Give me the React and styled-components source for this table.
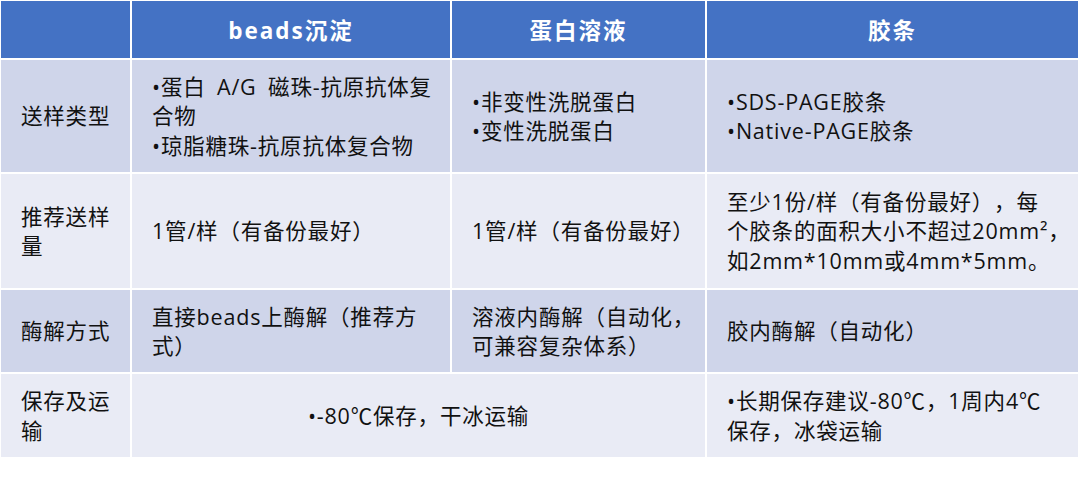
import React from "react";
import styled, { createGlobalStyle } from "styled-components";

const Global = createGlobalStyle`
  html, body { margin: 0; padding: 0; background: #ffffff; }
  body {
    font-family: "Open Sans", "Noto Sans CJK SC", sans-serif;
    text-spacing-trim: space-all;
  }
`;

const Page = styled.div`
  padding: 1px 0 0 1px;
  width: 1080px;
  height: 488px;
  box-sizing: border-box;
  background: #ffffff;
`;

const Table = styled.div`
  display: grid;
  grid-template-columns: 129px 318px 253px 371px;
  grid-template-rows: 57px 112px 114px 82px 83px;
  gap: 2px;
  background: #ffffff;
`;

const HeaderCell = styled.div`
  background: #4472c4;
  color: #ffffff;
  font-weight: 700;
  font-size: 22.5px;
  letter-spacing: 2px;
  display: flex;
  align-items: center;
  justify-content: center;
  text-spacing-trim: space-all;
`;

const Cell = styled.div`
  background: ${(p) => (p.$tone === "dark" ? "#cfd5ea" : "#e9ebf5")};
  color: #111111;
  font-size: 21.5px;
  letter-spacing: 0.8px;
  line-height: 29.5px;
  display: flex;
  flex-direction: column;
  justify-content: center;
  align-items: ${(p) => (p.$center ? "center" : "flex-start")};
  padding-left: ${(p) => p.$padLeft}px;
  grid-column: ${(p) => (p.$span ? `span ${p.$span}` : "auto")};
  white-space: pre;
  box-sizing: border-box;
  text-spacing-trim: space-all;
`;

const Line = styled.span`
  display: block;
`;

const rows = [
  {
    tone: "dark",
    label: ["送样类型"],
    cells: [
      { lines: ["•蛋白\u2002A/G\u2002磁珠-抗原抗体复", "合物", "•琼脂糖珠-抗原抗体复合物"] },
      { lines: ["•非变性洗脱蛋白", "•变性洗脱蛋白"] },
      { lines: ["•SDS-PAGE胶条", "•Native-PAGE胶条"] },
    ],
  },
  {
    tone: "light",
    label: ["推荐送样", "量"],
    cells: [
      { lines: ["1管/样（有备份最好）"] },
      { lines: ["1管/样（有备份最好）"] },
      {
        lines: [
          "至少1份/样（有备份最好），每",
          "个胶条的面积大小不超过20mm²，",
          "如2mm*10mm或4mm*5mm。",
        ],
      },
    ],
  },
  {
    tone: "dark",
    label: ["酶解方式"],
    cells: [
      { lines: ["直接beads上酶解（推荐方", "式）"] },
      { lines: ["溶液内酶解（自动化，", "可兼容复杂体系）"] },
      { lines: ["胶内酶解（自动化）"] },
    ],
  },
  {
    tone: "light",
    label: ["保存及运", "输"],
    cells: [
      { lines: ["•-80℃保存，干冰运输"], span: 2, center: true },
      { lines: ["•长期保存建议-80℃，1周内4℃", "保存，冰袋运输"] },
    ],
  },
];

export default function App() {
  return (
    <Page>
      <Global />
      <Table>
        <HeaderCell />
        <HeaderCell>beads沉淀</HeaderCell>
        <HeaderCell>蛋白溶液</HeaderCell>
        <HeaderCell>胶条</HeaderCell>
        {rows.map((row, ri) => (
          <React.Fragment key={ri}>
            <Cell $tone={row.tone} $padLeft={20}>
              {row.label.map((l, i) => (
                <Line key={i}>{l}</Line>
              ))}
            </Cell>
            {row.cells.map((c, ci) => (
              <Cell
                key={ci}
                $tone={row.tone}
                $span={c.span}
                $center={c.center}
                $padLeft={c.center ? 0 : 20}
              >
                {c.lines.map((l, i) => (
                  <Line key={i}>{l}</Line>
                ))}
              </Cell>
            ))}
          </React.Fragment>
        ))}
      </Table>
    </Page>
  );
}
